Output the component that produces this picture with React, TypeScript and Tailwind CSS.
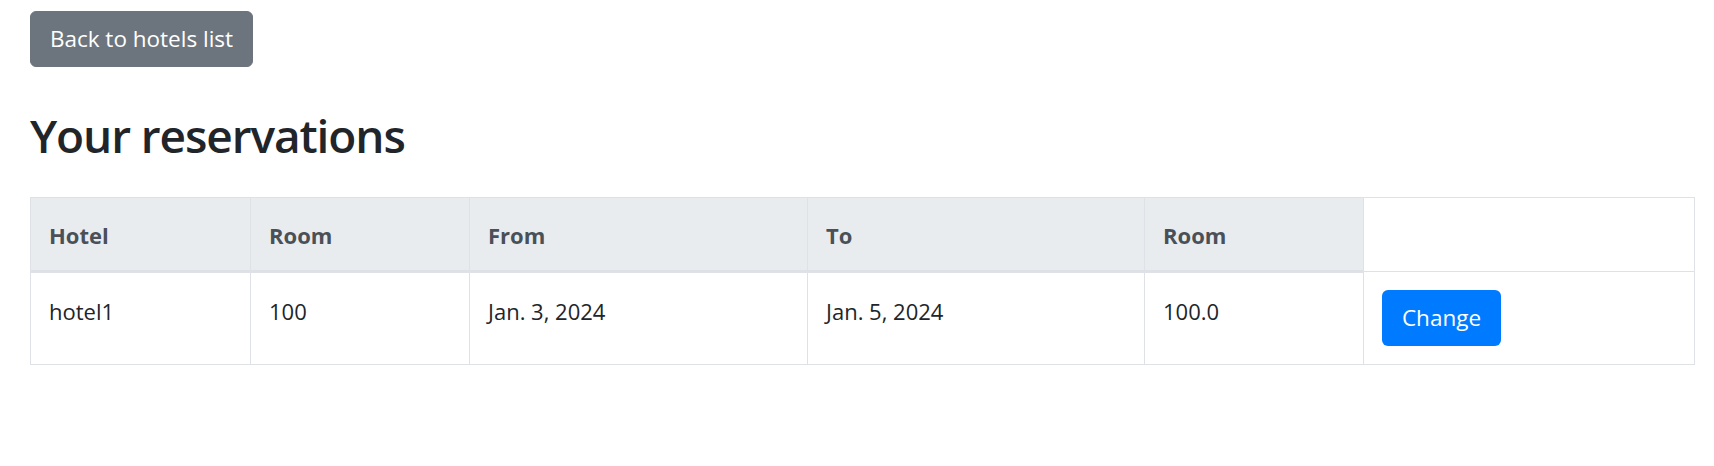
const font = { fontFamily: '"Open Sans", "Noto Sans", sans-serif' };

type Reservation = {
  hotel: string;
  room: string;
  from: string;
  to: string;
  price: string;
};

const reservations: Reservation[] = [
  { hotel: "hotel1", room: "100", from: "Jan. 3, 2024", to: "Jan. 5, 2024", price: "100.0" },
];

const headers = ["Hotel", "Room", "From", "To", "Room"];
const widths = ["w-[220px]", "w-[219px]", "w-[338px]", "w-[337px]", "w-[219px]", "w-[331px]"];

export default function App() {
  return (
    <div className="min-h-[466px] bg-white pl-[30px] pt-[11px] text-[#212529]" style={font}>
      {/* Back button */}
      <button className="flex h-[56px] w-[223px] items-center justify-center rounded-[6px] border border-[#6c757d] bg-[#6c757d] text-[22.5px] text-white">
        Back to hotels list
      </button>

      <h1 className="mt-[38px] text-[46px] font-semibold leading-[60px] tracking-[-1.1px] text-[#212529]">
        Your reservations
      </h1>

      {/* Reservations table */}
      <table className="mt-[32px] w-[1664px] table-fixed border-collapse border border-[#dee2e6] text-[22px]">
        <thead>
          <tr>
            {headers.map((h, i) => (
              <th
                key={i}
                className={`${widths[i]} h-[73px] border border-b-[3px] border-[#dee2e6] bg-[#e9ecef] px-[18px] pt-[19px] pb-[17px] text-left font-bold leading-[36px] text-[#495057]`}
              >
                {h}
              </th>
            ))}
            <th className={`${widths[5]} border border-[#dee2e6] bg-white`} />
          </tr>
        </thead>
        <tbody>
          {reservations.map((r) => (
            <tr key={r.hotel}>
              {[r.hotel, r.room, r.from, r.to, r.price].map((v, i) => (
                <td key={i} className="border border-[#dee2e6] px-[18px] pt-[20px] pb-[16px] align-top leading-[36px]">
                  {v}
                </td>
              ))}
              <td className="border border-[#dee2e6] p-[18px] align-top">
                <button className="flex h-[56px] w-[119px] items-center justify-center rounded-[6px] bg-[#007bff] text-[22.5px] text-white">
                  Change
                </button>
              </td>
            </tr>
          ))}
        </tbody>
      </table>
    </div>
  );
}
